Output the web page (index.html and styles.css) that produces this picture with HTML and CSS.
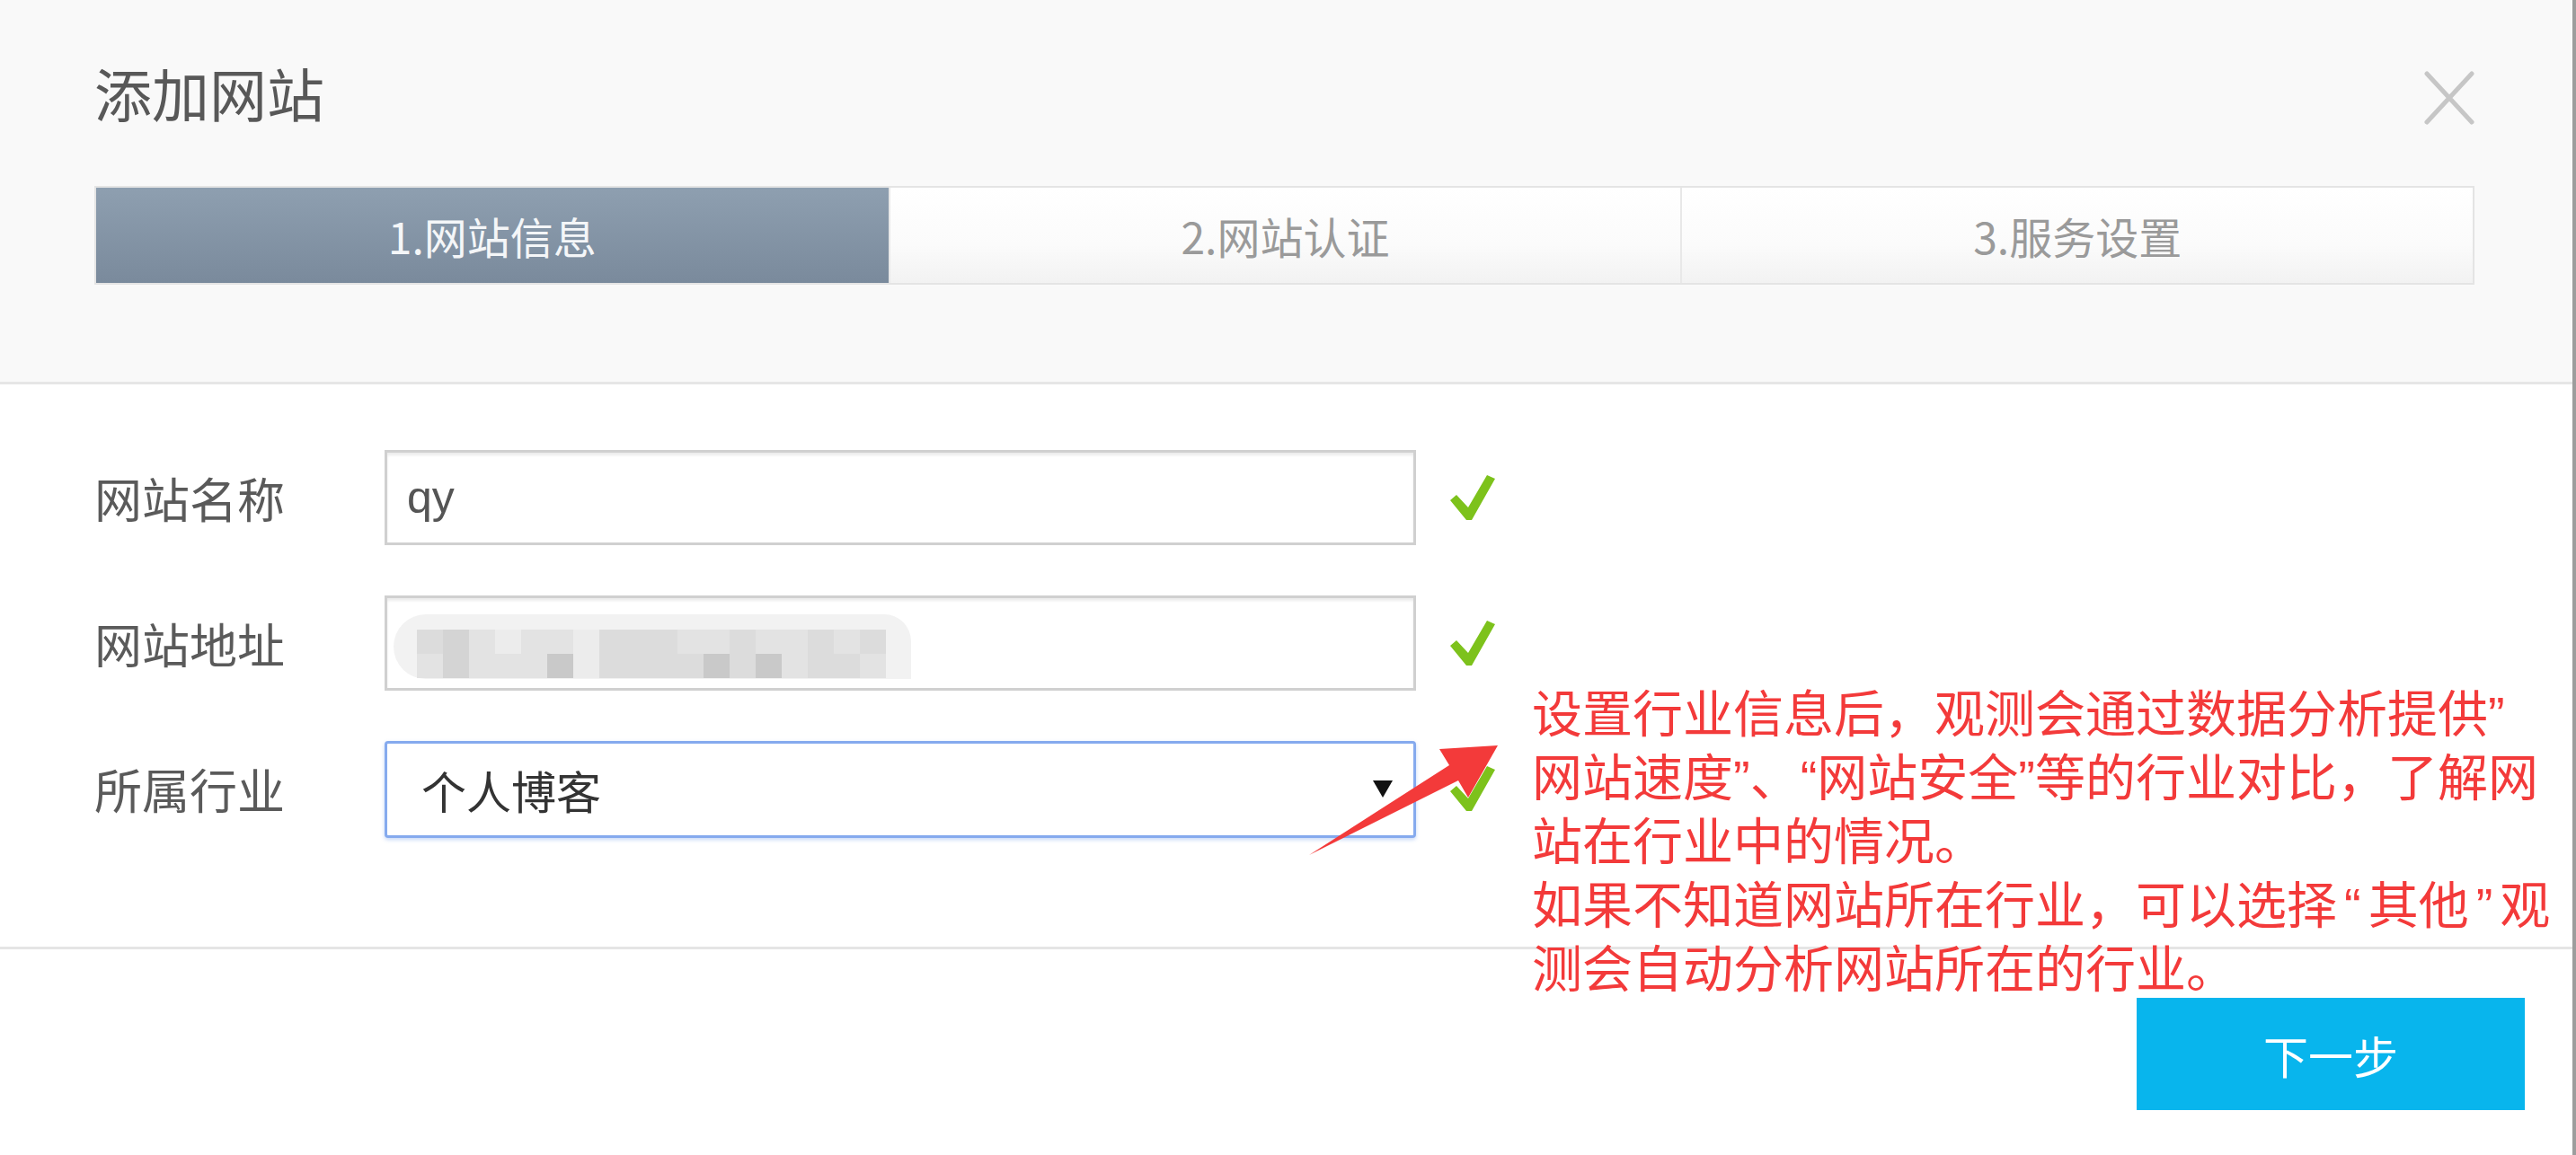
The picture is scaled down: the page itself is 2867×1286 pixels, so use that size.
FILE: index.html
```html
<!DOCTYPE html>
<html lang="zh-CN">
<head>
  <title>添加网站</title>
  <meta charset="utf-8">
  <link rel="stylesheet" href="styles.css">
</head>
<body>
  <div class="modal">
    <div class="modal-header">
      <div class="title-row">
        <h1 class="title">添加网站</h1>
        <svg class="close" width="56" height="60" viewBox="0 0 56 60">
          <path d="M3 3 L53 57 M53 3 L3 57" stroke="#c6c6c6" stroke-width="5" stroke-linecap="round"/>
        </svg>
      </div>
      <div class="steps">
        <div class="step active">1.网站信息</div>
        <div class="step">2.网站认证</div>
        <div class="step">3.服务设置</div>
      </div>
    </div>

    <div class="modal-body">
      <div class="form-row">
        <label class="label">网站名称</label>
        <input class="field" type="text" value="qy">
        <svg class="check" width="50" height="50" viewBox="0 0 50 50"><polygon points="0,28 7,22 20,36 41,0 50,4 24,50 18,50"/></svg>
      </div>
      <div class="form-row">
        <label class="label">网站地址</label>
        <div class="field blurred">
          <div class="mosaic">
            <div class="mrow">
              <span class="s2"></span><span class="s3"></span><span class="s1"></span><span class="s0"></span><span class="s1"></span><span class="s1"></span><span class="s0"></span><span class="s2"></span><span class="s2"></span><span class="s2"></span><span class="s1"></span><span class="s1"></span><span class="s2"></span><span class="s1"></span><span class="s1"></span><span class="s2"></span><span class="s1"></span><span class="s2"></span>
            </div>
            <div class="mrow">
              <span class="s1"></span><span class="s3"></span><span class="s1"></span><span class="s1"></span><span class="s1"></span><span class="s4"></span><span class="s0"></span><span class="s2"></span><span class="s2"></span><span class="s2"></span><span class="s2"></span><span class="s4"></span><span class="s2"></span><span class="s4"></span><span class="s1"></span><span class="s2"></span><span class="s2"></span><span class="s1"></span>
            </div>
          </div>
        </div>
        <svg class="check" width="50" height="50" viewBox="0 0 50 50"><polygon points="0,28 7,22 20,36 41,0 50,4 24,50 18,50"/></svg>
      </div>
      <div class="form-row">
        <label class="label">所属行业</label>
        <div class="select-wrap">
          <select class="field select">
            <option>个人博客</option>
          </select>
          <span class="caret"></span>
        </div>
        <svg class="check" width="50" height="50" viewBox="0 0 50 50"><polygon points="0,28 7,22 20,36 41,0 50,4 24,50 18,50"/></svg>
      </div>
    </div>

    <div class="modal-footer">
      <button type="button" class="next">下一步</button>
    </div>

    <!-- annotation drawn over the dialog -->
    <svg class="arrow" width="240" height="160" viewBox="0 0 240 160">
      <polygon points="227,20 162,24 173,42 17,142 183,59 194,78" fill="#f33a3a"/>
    </svg>
    <div class="note">
      设置行业信息后，观测会通过数据分析提供”<br>
      网站速度”、“网站安全”等的行业对比，了解网<br>
      站在行业中的情况。<br>
      如果不知道网站所在行业，可以选择<span class="wq">“</span>其他<span class="wq">”</span>观<br>
      测会自动分析网站所在的行业。
    </div>
  </div>
</body>
</html>
```

FILE: styles.css
```css
html, body {
  height: 100%;
  margin: 0;
  padding: 0;
  background: #9d9d9d;
  font-family: "Noto Sans CJK SC", "Liberation Sans", sans-serif;
  color: #555;
}
.modal {
  position: relative;
  width: 2863px;
  height: 100%;
  background: #fff;
  display: flex;
  flex-direction: column;
}
.modal-header {
  background: #f9f9f9;
  border-bottom: 3px solid #e6e6e6;
  padding: 62px 109px 108px 105px;
}
.title-row {
  display: flex;
  justify-content: space-between;
  align-items: center;
  height: 80px;
}
.title {
  margin: 0;
  font-size: 64px;
  font-weight: normal;
  line-height: 80px;
  color: #585858;
}
.close {
  margin-top: 14px;
}
.steps {
  margin-top: 65px;
  display: grid;
  grid-template-columns: 1fr 1fr 1fr;
  border: 2px solid #e4e4e4;
}
.step {
  height: 106px;
  line-height: 106px;
  text-align: center;
  font-size: 48px;
  color: #9a9a9a;
  background: linear-gradient(#ffffff, #fbfbfb 60%, #f2f2f2);
  border-left: 2px solid #e8e8e8;
}
.step:first-child {
  border-left: none;
}
.step.active {
  color: #f4f6f8;
  background: linear-gradient(#8e9fb0, #7a8a9c);
}
.modal-body {
  padding: 73px 0 0 105px;
  height: 553px;
  display: flex;
  flex-direction: column;
  gap: 56px;
}
.form-row {
  display: flex;
  align-items: center;
  height: 106px;
}
.label {
  width: 323px;
  font-size: 53px;
  color: #5a5a5a;
}
.field {
  box-sizing: border-box;
  width: 1148px;
  height: 106px;
  border: 3px solid #d0d0d0;
  box-shadow: inset 0 3px 3px #ececec;
  background: #fff;
  font-family: "Liberation Sans", "Noto Sans CJK SC", sans-serif;
  font-size: 50px;
  color: #555;
  padding: 0 22px;
  outline: none;
}
.blurred {
  display: flex;
  align-items: center;
  padding: 0 0 0 7px;
}
.mosaic {
  background: #f2f2f2;
  border-radius: 36px 30px 0 36px;
  padding: 17px 27px 0 26px;
  height: 72px;
  box-sizing: border-box;
  width: 576px;
  margin-top: 8px;
}
.mrow {
  display: flex;
}
.mrow span {
  width: 29px;
  height: 27px;
}
.s0 { background: #ececec; }
.s1 { background: #e3e3e3; }
.s2 { background: #dcdcdc; }
.s3 { background: #d4d4d4; }
.s4 { background: #c9c9c9; }
.select-wrap {
  position: relative;
  margin-top: 2px;
}
.select {
  -webkit-appearance: none;
  appearance: none;
  height: 108px;
  border: 3px solid #85aaee;
  border-radius: 4px;
  box-shadow: 0 2px 4px rgba(90, 140, 230, 0.35);
  font-family: "Noto Sans CJK SC", sans-serif;
  color: #333;
  padding-left: 38px;
}
.caret {
  position: absolute;
  right: 26px;
  top: 44px;
  width: 0;
  height: 0;
  border-left: 11px solid transparent;
  border-right: 11px solid transparent;
  border-top: 19px solid #111;
}
.check {
  margin-left: 38px;
  fill: #7dc21c;
}
.modal-footer {
  border-top: 3px solid #e5e5e5;
  padding: 54px 53px 0 0;
  display: flex;
  justify-content: flex-end;
}
.next {
  width: 432px;
  height: 125px;
  border: none;
  background: #08b5ed;
  color: #fff;
  font-family: "Noto Sans CJK SC", sans-serif;
  font-size: 50px;
  cursor: pointer;
}
.arrow {
  position: absolute;
  left: 1440px;
  top: 810px;
}
.note {
  position: absolute;
  left: 1705px;
  top: 760px;
  font-family: "Liberation Sans", "Noto Sans CJK SC", sans-serif;
  font-size: 56px;
  line-height: 71px;
  color: #f33a3a;
  white-space: nowrap;
}
.wq {
  margin: 0 8px;
}
```
